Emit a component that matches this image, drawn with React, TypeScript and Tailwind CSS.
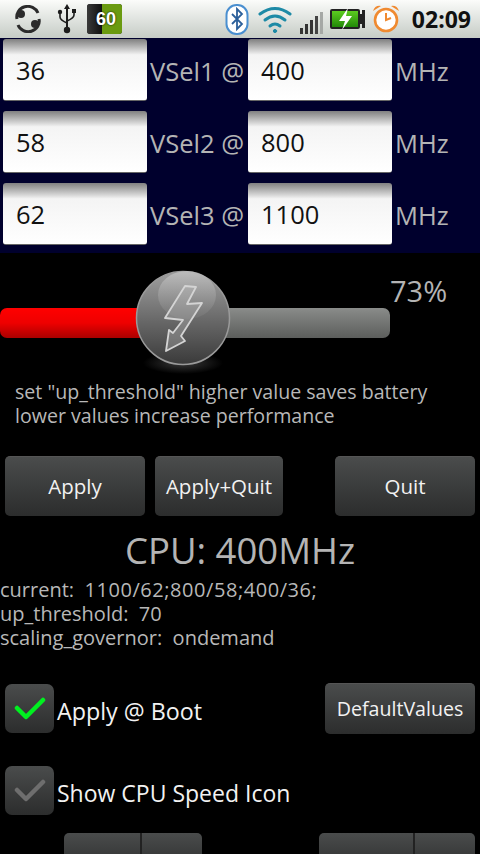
const font = { fontFamily: '"Open Sans", "Noto Sans", sans-serif' };

const voltageRows = [
    { vsel: "36", label: "VSel1 @", freq: "400" },
    { vsel: "58", label: "VSel2 @", freq: "800" },
    { vsel: "62", label: "VSel3 @", freq: "1100" },
];

const btn =
    "flex items-center justify-center rounded-[5px] border-t border-[#555] bg-gradient-to-b from-[#4a4c4c] to-[#2c2d2d] text-[#f2f2f2] text-[20.5px] leading-none";

function StatusBar() {
    return (
        <div className="h-[38px] flex items-center bg-gradient-to-b from-[#fbfcfa] to-[#c6ccc6] relative z-10">
            {/* sync */}
            <svg className="ml-[14px] w-[28px] h-[28px]" viewBox="0 0 28 28" fill="none">
                <path d="M3 14 A11 10.5 0 0 1 24 8" stroke="#2b2b2b" strokeWidth="3" />
                <path d="M25 14 A11 10.5 0 0 1 4 20" stroke="#2b2b2b" strokeWidth="3" />
                <circle cx="7" cy="9" r="4" fill="#2b2b2b" />
                <circle cx="21" cy="19" r="4" fill="#2b2b2b" />
            </svg>
            {/* usb */}
            <svg className="ml-[15px] w-[20px] h-[32px]" viewBox="0 0 20 32" fill="none">
                <path d="M10 1 L7 6 H13 Z" fill="#1c1c1c" />
                <path d="M10 5 V27" stroke="#1c1c1c" strokeWidth="2" />
                <path d="M3 10 V14 Q3 17 10 20" stroke="#1c1c1c" strokeWidth="1.6" />
                <path d="M17 9 V12 Q17 15 10 18" stroke="#1c1c1c" strokeWidth="1.6" />
                <circle cx="3" cy="9" r="2.2" fill="#1c1c1c" />
                <rect x="15" y="6" width="4" height="4" fill="#1c1c1c" />
                <circle cx="10" cy="27" r="3.2" fill="#1c1c1c" />
            </svg>
            {/* battery percent */}
            <div className="ml-[10px] w-[35px] h-[30px] rounded-[3px] flex overflow-hidden relative bg-[#1b1b1b]">
                <div className="w-[15px] bg-gradient-to-r from-[#3a3a3a] to-[#111]" />
                <div className="flex-1 bg-[#6a9a10]" />
                <span className="absolute inset-0 flex items-center justify-center text-white font-bold text-[18px] leading-none pl-[3px] [text-shadow:0_0_2px_#000]" style={{ fontFamily: '"Liberation Sans", sans-serif' }}>
                    60
                </span>
            </div>
            <div className="ml-auto flex items-center">
                {/* bluetooth */}
                <svg className="w-[24px] h-[32px]" viewBox="0 0 24 32" fill="none">
                    <rect x="1.5" y="2" width="21" height="29" rx="10" fill="#fff" stroke="#4a8fd0" strokeWidth="2" />
                    <path d="M7 11 L17 21 L12 26 V6 L17 11 L7 21" stroke="#2b5f9a" strokeWidth="1.8" />
                </svg>
                {/* wifi */}
                <svg className="ml-[9px] w-[34px] h-[28px]" viewBox="0 0 34 28" fill="none" stroke="#1d8aa6" strokeLinecap="round">
                    <path d="M2 9 Q17 -2 32 9" strokeWidth="3" />
                    <path d="M7 15 Q17 7 27 15" strokeWidth="3" />
                    <path d="M12 21 Q17 17 22 21" strokeWidth="3" />
                    <circle cx="17" cy="26" r="1.6" fill="#1d8aa6" />
                </svg>
                {/* signal */}
                <div className="ml-[8px] flex items-end gap-[2px] h-[23px] mt-[6px]">
                    <div className="w-[3px] h-[6px] bg-[#333]" />
                    <div className="w-[3px] h-[10px] bg-[#333]" />
                    <div className="w-[3px] h-[14px] bg-[#333]" />
                    <div className="w-[3px] h-[18px] bg-[#444]" />
                    <div className="w-[3px] h-[22px] bg-[#a5a8a5]" />
                </div>
                {/* battery charging */}
                <div className="ml-[7px] flex items-center">
                    <div className="w-[30px] h-[20px] relative rounded-[2px] border-2 border-[#222] bg-gradient-to-b from-[#5ccc20] to-[#208a08]">
                        <svg className="absolute left-[4px] top-[-4px] w-[18px] h-[24px]" viewBox="0 0 18 24">
                            <path d="M12 1 L3 14 H9 L6 23 L16 9 H10 Z" fill="#fff" />
                        </svg>
                    </div>
                    <div className="w-[3px] h-[10px] bg-[#222]" />
                    <div className="w-[3px] h-[18px] bg-[#222] ml-[-1px]" />
                </div>
                {/* alarm */}
                <svg className="ml-[7px] w-[28px] h-[30px]" viewBox="0 0 28 30" fill="none">
                    <circle cx="14" cy="16" r="11" fill="#fff" stroke="#f08a30" strokeWidth="2.6" />
                    <path d="M14 9 V16 L19 14" stroke="#f08a30" strokeWidth="2" />
                    <path d="M1 7 Q3 1 9 2 Z" fill="#f08a30" />
                    <path d="M27 7 Q25 1 19 2 Z" fill="#f08a30" />
                </svg>
                <span className="ml-[12px] mr-[9px] text-[#111] text-[23px] font-bold leading-none" style={font}>
                    02:09
                </span>
            </div>
        </div>
    );
}

function Field({ value }: { value: string }) {
    return (
        <div className="w-[144px] h-[62px] rounded-[3px] bg-gradient-to-b from-[#808080] via-[#f4f4f4] via-[26%] to-white border-b border-[#666] flex items-center pl-[13px] pt-[2px] text-[#111] text-[25.5px]">
            {value}
        </div>
    );
}

function VoltagePanel() {
    return (
        <div className="h-[215px] bg-[#00002d] pl-[3px] pt-[1px] flex flex-col gap-[10px]">
            {voltageRows.map((row) => (
                <div key={row.label} className="flex items-center">
                    <Field value={row.vsel} />
                    <span className="w-[101px] pl-[3px] pt-[2px] text-[#b4b4b4] text-[25.5px] whitespace-nowrap">{row.label}</span>
                    <Field value={row.freq} />
                    <span className="pl-[3px] pt-[2px] text-[#b4b4b4] text-[25.5px]">MHz</span>
                </div>
            ))}
        </div>
    );
}

function Slider() {
    return (
        <div className="h-[130px] relative">
            <div className="absolute left-0 top-[55px] w-[390px] h-[30px] rounded-[7px] flex overflow-hidden">
                <div className="w-[142px] bg-gradient-to-b from-[#ff0000] via-[#ee0000] to-[#aa0000]" />
                <div className="flex-1 bg-gradient-to-b from-[#8a8c8a] to-[#5c5e5c]" />
            </div>
            <span className="absolute left-[390px] top-[19px] text-[#b4b4b4] text-[29px] leading-[38px]">73%</span>
            {/* thumb */}
            <svg className="absolute left-[132px] top-[15px] w-[102px] h-[116px]" viewBox="0 0 102 116">
                <defs>
                    <linearGradient id="ball" x1="0" y1="0" x2="0" y2="1">
                        <stop offset="0" stopColor="#a0a0a0" />
                        <stop offset="0.55" stopColor="#666" />
                        <stop offset="1" stopColor="#3a3a3a" />
                    </linearGradient>
                    <linearGradient id="gloss" x1="0" y1="0" x2="0" y2="1">
                        <stop offset="0" stopColor="#d4d4d4" />
                        <stop offset="1" stopColor="#777" />
                    </linearGradient>
                    <radialGradient id="shadow">
                        <stop offset="0" stopColor="#3a3a3a" />
                        <stop offset="1" stopColor="#000" />
                    </radialGradient>
                </defs>
                <ellipse cx="51" cy="95" rx="40" ry="11" fill="url(#shadow)" />
                <circle cx="51" cy="50" r="46.5" fill="url(#ball)" stroke="#9a9a9a" strokeWidth="1.5" />
                <ellipse cx="55" cy="27" rx="29" ry="24" fill="url(#gloss)" opacity="0.55" />
                <path
                    d="M53 18 L64 19 L55 36 L70 35 L49 68 L53 73 L34 83 L37 62 L41 65 L51 52 L33 50 Z"
                    fill="#b8b8b8"
                    fillOpacity="0.35"
                    stroke="#d4d4d4"
                    strokeWidth="1.8"
                    strokeLinejoin="round"
                />
            </svg>
        </div>
    );
}

export default function App() {
    return (
        <div className="w-[480px] h-[854px] overflow-hidden bg-black" style={font}>
            <StatusBar />
            <VoltagePanel />
            <Slider />
            <div className="pl-[15px] text-[#b8b8b8] text-[19.6px] leading-[24px] mt-[-3px]">
                <p>set "up_threshold" higher value saves battery</p>
                <p>lower values increase performance</p>
            </div>
            <div className="flex mt-[28px] pl-[5px]">
                <div className={`${btn} w-[140px] h-[60px]`}>Apply</div>
                <div className={`${btn} w-[128px] h-[60px] ml-[10px]`}>Apply+Quit</div>
                <div className={`${btn} w-[140px] h-[60px] ml-[52px]`}>Quit</div>
            </div>
            <div className="text-center text-[#b4b4b4] text-[36.5px] leading-[48px] mt-[10px]">CPU: 400MHz</div>
            <div className="text-[#b8b8b8] text-[20px] leading-[24px] mt-[4px] whitespace-pre">
                <p>
                    current:  <span className="tracking-[0.55px]">1100/62;800/58;400/36;</span>
                </p>
                <p>up_threshold:  70</p>
                <p>scaling_governor:  ondemand</p>
            </div>
            <div className="flex items-center mt-[33px] pl-[5px] h-[50px]">
                <div className="w-[49px] h-[49px] rounded-[7px] bg-gradient-to-b from-[#4a4c4c] to-[#2c2d2d] flex items-center justify-center">
                    <svg className="w-[32px] h-[24px]" viewBox="0 0 32 24" fill="none">
                        <path d="M3 12 L12 21 L29 4" stroke="#00f020" strokeWidth="4.5" strokeLinecap="round" strokeLinejoin="round" />
                    </svg>
                </div>
                <span className="ml-[3px] pt-[7px] text-[#f2f2f2] text-[23.3px]">Apply @ Boot</span>
                <div className={`${btn} ml-auto mr-[5px] w-[150px] h-[51px] !text-[19.6px]`}>DefaultValues</div>
            </div>
            <div className="flex items-center mt-[32px] pl-[5px] h-[50px]">
                <div className="w-[49px] h-[49px] rounded-[7px] bg-gradient-to-b from-[#4a4c4c] to-[#2c2d2d] flex items-center justify-center">
                    <svg className="w-[32px] h-[24px]" viewBox="0 0 32 24" fill="none">
                        <path d="M3 12 L12 21 L29 4" stroke="#6e6e6e" strokeWidth="4.5" strokeLinecap="round" strokeLinejoin="round" />
                    </svg>
                </div>
                <span className="ml-[3px] pt-[7px] text-[#f2f2f2] text-[23px]">Show CPU Speed Icon</span>
            </div>
            <div className="flex mt-[18px]">
                <div className="ml-[64px] w-[138px] h-[40px] rounded-t-[5px] bg-gradient-to-b from-[#4a4c4c] to-[#2c2d2d] flex">
                    <div className="w-[78px] border-r-2 border-[#222]" />
                </div>
                <div className="ml-[117px] w-[156px] h-[40px] rounded-t-[5px] bg-gradient-to-b from-[#4a4c4c] to-[#2c2d2d] flex">
                    <div className="w-[96px] border-r-2 border-[#222]" />
                </div>
            </div>
        </div>
    );
}
